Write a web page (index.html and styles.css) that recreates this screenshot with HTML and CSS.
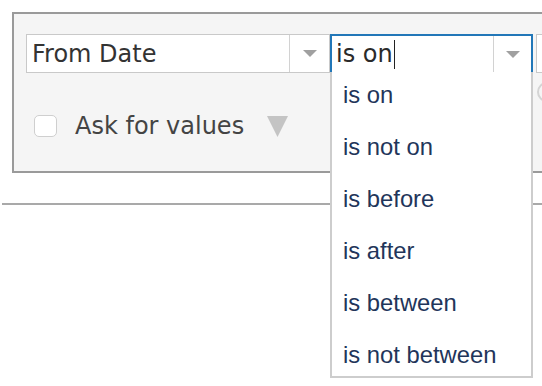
FILE: index.html
```html
<!DOCTYPE html>
<html lang="en">
<head>
  <meta charset="UTF-8">
  <title>Filter</title>
  <link rel="stylesheet" href="styles.css">
</head>
<body>
  <div class="panel">
    <div class="fields">
      <div class="select select-field">
        <span class="select-value">From Date</span>
        <span class="select-arrow"><svg width="14" height="7" viewBox="0 0 14 7"><path d="M0 0 H14 L7 7 Z" fill="#a0a0a0"/></svg></span>
      </div>
      <div class="select select-op">
        <span class="select-value">is on<span class="caret"></span></span>
        <span class="select-arrow"><svg width="14" height="7" viewBox="0 0 14 7"><path d="M0 0 H14 L7 7 Z" fill="#a0a0a0"/></svg></span>
        <ul class="menu">
          <li>is on</li>
          <li>is not on</li>
          <li>is before</li>
          <li>is after</li>
          <li>is between</li>
          <li>is not between</li>
        </ul>
      </div>
      <div class="extra">
        <div class="select select-cut"></div>
        <span class="circle"></span>
      </div>
    </div>
    <div class="ask-row">
      <span class="checkbox"></span>
      <span class="ask-label">Ask for values</span>
      <svg class="ask-arrow" width="21" height="21" viewBox="0 0 21 21"><path d="M0 0 H21 L10.5 21 Z" fill="#c4c4c4"/></svg>
    </div>
  </div>
  <div class="divider"></div>
</body>
</html>
```

FILE: styles.css
```css
body {
  margin: 0;
  min-height: 100vh;
  background: #fff;
  font-family: 'DejaVu Sans', Verdana, sans-serif;
}

.panel {
  margin: 12px 0 0 12px;
  box-sizing: border-box;
  border: 2px solid #9a9a9a;
  border-right: none;
  background: #f5f5f5;
  padding: 20px 0 31px 12px;
}

.fields {
  display: flex;
  align-items: flex-start;
  height: 39px;
}

.select {
  position: relative;
  display: flex;
  flex-shrink: 0;
  height: 39px;
  box-sizing: border-box;
  background: #fff;
}

.select-field {
  width: 304px;
  border: 1px solid #c9c9c9;
}

.select-op {
  width: 203px;
  border: 2px solid #2277b8;
  border-bottom: 1px solid #cfcfcf;
}

.select-value {
  flex: 1;
  display: flex;
  align-items: center;
  padding-left: 5px;
  font-size: 24px;
  color: #333;
  white-space: nowrap;
}

.select-op .select-value {
  padding-left: 4px;
  color: #2a2a2a;
}

.caret {
  display: inline-block;
  width: 1px;
  height: 29px;
  margin-left: 1px;
  background: #222;
}

.select-arrow {
  width: 39px;
  border-left: 1px solid #d2d2d2;
  display: flex;
  align-items: center;
  justify-content: center;
}

.select-op .select-arrow {
  width: 37px;
}

.menu {
  position: absolute;
  left: -2px;
  top: 100%;
  width: 203px;
  height: 306px;
  box-sizing: border-box;
  margin: 0;
  padding: 0;
  list-style: none;
  background: #fff;
  border: 2px solid #cdcdcd;
  border-top: none;
  overflow: hidden;
  z-index: 2;
}

.menu li {
  height: 52px;
  box-sizing: border-box;
  padding: 0 0 6px 11px;
  line-height: 46px;
  font-family: 'Liberation Sans', Arial, sans-serif;
  font-size: 23.8px;
  color: #22355a;
}

.extra {
  flex: 1;
  min-width: 0;
  margin-left: 3px;
  display: flex;
  flex-direction: column;
  overflow: hidden;
}

.select-cut {
  border: 1px solid #c9c9c9;
  border-right: none;
}

.circle {
  flex-shrink: 0;
  width: 20px;
  height: 20px;
  margin: 9px 0 0 1px;
  box-sizing: border-box;
  border: 2px solid #d4d4d4;
  border-radius: 50%;
}

.ask-row {
  display: flex;
  align-items: center;
  height: 28px;
  margin-top: 39px;
}

.checkbox {
  width: 23px;
  height: 22px;
  margin-left: 8px;
  box-sizing: border-box;
  border: 1px solid #cfcfcf;
  border-radius: 5px;
  background: #fff;
}

.ask-label {
  margin-left: 18px;
  font-size: 24px;
  color: #444;
}

.ask-arrow {
  margin-left: 23px;
}

.divider {
  margin: 30px 0 0 2px;
  height: 2px;
  background: #a9a9a9;
}
```
